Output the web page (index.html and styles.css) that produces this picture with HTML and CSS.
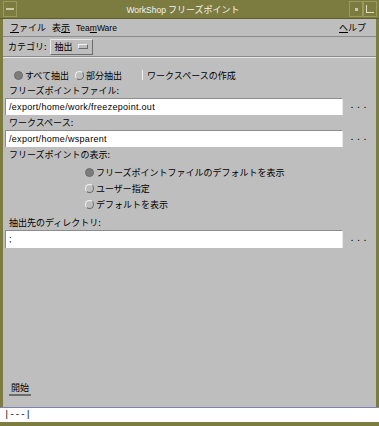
FILE: index.html
```html
<!DOCTYPE html>
<html lang="ja">
<head>
  <meta charset="UTF-8">
  <title>WorkShop フリーズポイント</title>
  <link rel="stylesheet" href="styles.css">
</head>
<body>
  <div class="window">
    <div class="titlebar">
      <span class="wm-btn menu-btn"><span class="dash"></span></span>
      <span class="title"><span class="latin">WorkShop</span> フリーズポイント</span>
      <span class="wm-btn min-btn"><span class="dot"></span></span>
      <span class="wm-btn max-btn"><span class="box"></span></span>
    </div>

    <div class="menubar">
      <span><u>フ</u>ァイル</span>
      <span>表<u>示</u></span>
      <span class="latin">Tea<u>m</u>Ware</span>
      <span class="help"><u>ヘ</u>ルプ</span>
    </div>

    <div class="optrow">
      <span>カテゴリ:</span>
      <span class="optmenu">抽出 <span class="optbar"></span></span>
    </div>

    <div class="content">
      <div class="choices">
        <label class="radio"><span class="dot on"></span>すべて抽出</label>
        <label class="radio"><span class="dot"></span>部分抽出</label>
        <label class="check"><span class="box"></span>ワークスペースの作成</label>
      </div>

      <div class="field-label">フリーズポイントファイル:</div>
      <div class="field">
        <div class="input">/export/home/work/freezepoint.out</div>
        <span class="more">. . .</span>
      </div>

      <div class="field-label">ワークスペース:</div>
      <div class="field">
        <div class="input">/export/home/wsparent</div>
        <span class="more">. . .</span>
      </div>

      <div class="field-label">フリーズポイントの表示:</div>
      <div class="showlist">
        <label class="radio"><span class="dot on"></span>フリーズポイントファイルのデフォルトを表示</label>
        <label class="radio"><span class="dot"></span>ユーザー指定</label>
        <label class="radio"><span class="dot"></span>デフォルトを表示</label>
      </div>

      <div class="field-label">抽出先のディレクトリ:</div>
      <div class="field last">
        <div class="input">;</div>
        <span class="more">. . .</span>
      </div>
    </div>

    <div class="actions">
      <span class="start">開始</span>
    </div>

    <div class="status">|---|</div>
  </div>
</body>
</html>
```

FILE: styles.css
```css
body {
  margin: 0;
  padding: 0;
  background: #bebebe;
  font-family: "Noto Sans CJK JP", "DejaVu Sans", sans-serif;
  font-size: 9px;
  color: #000;
}

.latin {
  font-family: "Liberation Sans", "Noto Sans CJK JP", sans-serif;
  font-size: 8.5px;
}

.window {
  width: 379px;
  height: 426px;
  box-sizing: border-box;
  border: 3px solid #7c7c40;
  border-top: 0;
  border-bottom-width: 4px;
  background: #bebebe;
  display: flex;
  flex-direction: column;
}

.titlebar {
  height: 18px;
  background: #7c7c40;
  color: #f4f4f4;
  display: flex;
  align-items: center;
  border-bottom: 1px solid #5c5c2c;
  margin: 0 -3px;
}

.title {
  flex: 1;
  text-align: center;
}

.wm-btn {
  width: 12px;
  height: 14px;
  border: 1px solid #9a9a5c;
  display: flex;
  align-items: center;
  justify-content: center;
}

.menu-btn {
  margin-left: 3px;
}

.menu-btn .dash {
  width: 8px;
  height: 2px;
  background: #c8c8a0;
}

.min-btn .dot {
  width: 3px;
  height: 3px;
  background: #c8c8a0;
}

.max-btn {
  margin-right: 2px;
}

.max-btn .box {
  width: 7px;
  height: 7px;
  border-left: 1px solid #e0e0c8;
  border-bottom: 1px solid #e0e0c8;
}

.menubar {
  height: 17px;
  display: flex;
  align-items: center;
  gap: 6px;
  padding: 0 10px 0 7px;
  border-bottom: 1px solid #8c8c8c;
}

.menubar u {
  text-underline-offset: 1px;
}

.menubar .help {
  margin-left: auto;
}

.optrow {
  height: 19px;
  display: flex;
  align-items: center;
  gap: 3px;
  padding: 0 5px;
  border-bottom: 1px solid #8c8c8c;
}

.optmenu {
  display: flex;
  align-items: center;
  gap: 5px;
  padding: 0 4px;
  height: 14px;
  border: 1px solid #e8e8e8;
  border-right-color: #6c6c6c;
  border-bottom-color: #6c6c6c;
}

.optbar {
  width: 8px;
  height: 3px;
  border: 1px solid #6c6c6c;
  border-top-color: #f0f0f0;
  border-left-color: #f0f0f0;
}

.content {
  flex: 1;
  padding: 9px 2px 0 2px;
  border-top: 1px solid #e8e8e8;
}

.choices {
  display: flex;
  align-items: center;
  gap: 6px;
  height: 16px;
  padding-left: 9px;
  margin-bottom: 1px;
}

.radio, .check {
  display: flex;
  align-items: center;
  gap: 2px;
  height: 16px;
}

.radio .dot {
  width: 7px;
  height: 7px;
  border-radius: 50%;
  border: 1px solid #f0f0f0;
  border-right-color: #6c6c6c;
  border-bottom-color: #6c6c6c;
}

.radio .dot.on {
  background: #7c7c7c;
  border-color: #6c6c6c;
}

.check .box {
  width: 1px;
  height: 10px;
  background: #f0f0f0;
  margin: 0 2px 0 14px;
}

.field-label {
  height: 13px;
  line-height: 13px;
  padding-left: 4px;
}

.field {
  display: flex;
  align-items: center;
  gap: 1px;
  margin: 1px 0 1px;
}

.input {
  flex: 1;
  height: 17px;
  line-height: 17px;
  background: #fff;
  padding-left: 3px;
  border-top: 1px solid #8c8c8c;
  border-left: 1px solid #8c8c8c;
  border-right: 1px solid #e8e8e8;
  box-sizing: border-box;
  font-family: "Liberation Sans", sans-serif;
  font-size: 9px;
  letter-spacing: 0.3px;
}

.field.last .input {
  height: 18px;
}

.more {
  width: 30px;
  height: 17px;
  line-height: 14px;
  text-align: center;
  font-size: 9px;
  letter-spacing: 1px;
}

.showlist {
  display: flex;
  flex-direction: column;
  padding-left: 80px;
  margin: 3px 0 4px;
}

.actions {
  padding: 0 6px 11px;
}

.start {
  display: inline-block;
  padding: 0 2px;
  border-bottom: 2px solid #6c6c6c;
  line-height: 13px;
}

.status {
  height: 14px;
  line-height: 14px;
  background: #fff;
  border-top: 1px solid #8080b0;
  padding-left: 4px;
  margin: 0 -3px;
  font-family: "Liberation Mono", monospace;
  font-size: 9px;
}
```
